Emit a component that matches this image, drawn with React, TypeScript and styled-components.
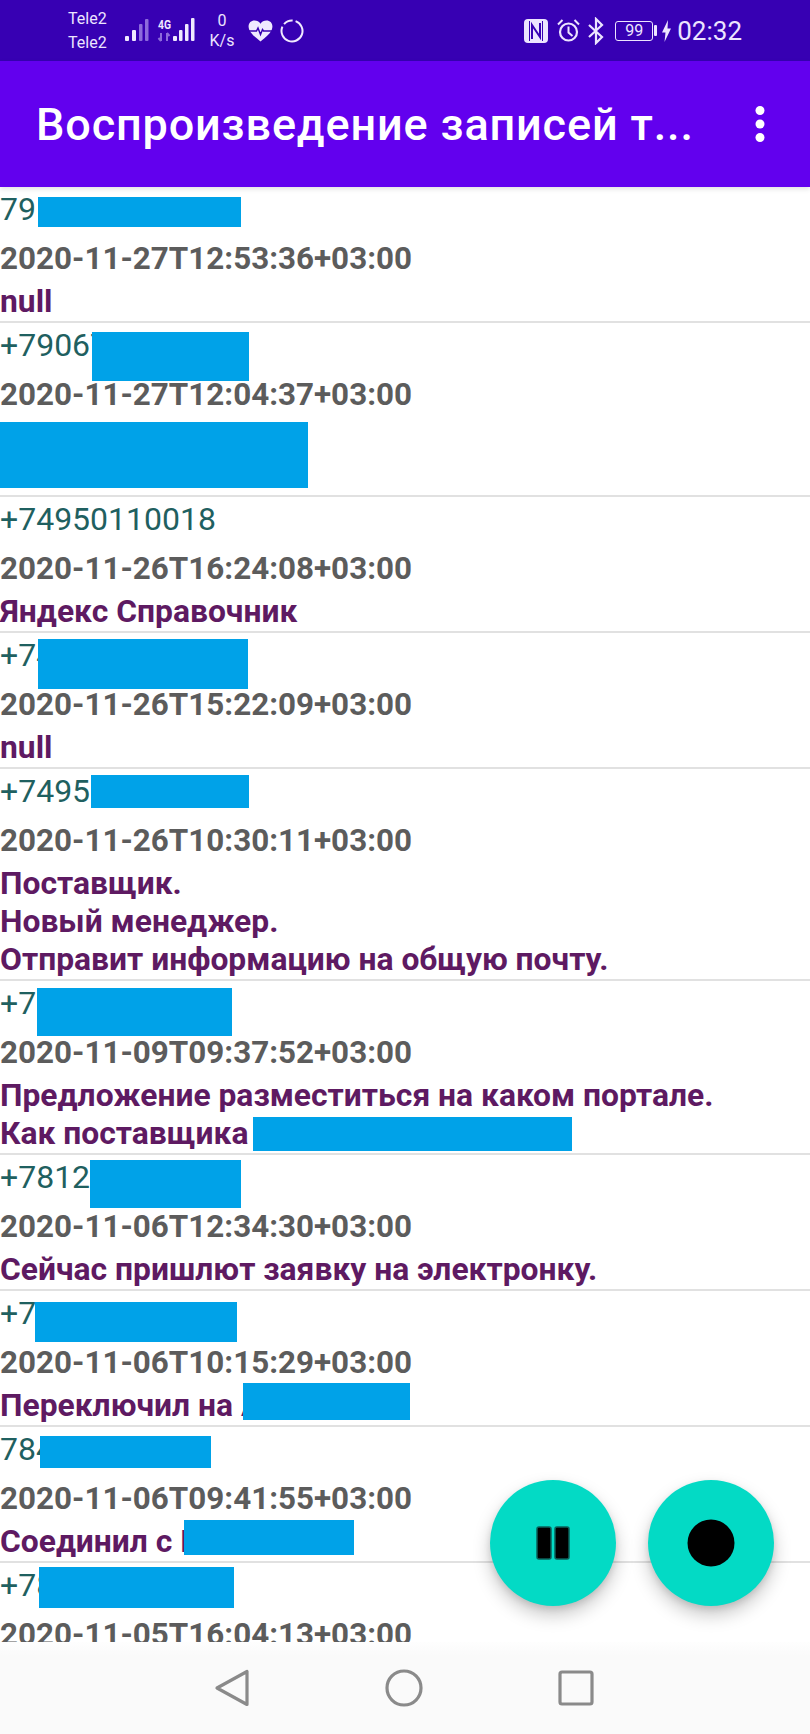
import React from "react";
import styled, { createGlobalStyle } from "styled-components";

type Block = { x: number; y: number; w: number; h: number };

type Call = {
  phone: string;
  date: string;
  note: string[];
  noteLines?: number;
  blocks: Block[];
};

// y of each block is counted from the top of its row
const calls: Call[] = [
  {
    phone: "79",
    date: "2020-11-27T12:53:36+03:00",
    note: ["null"],
    blocks: [{ x: 38, y: 10, w: 203, h: 30 }],
  },
  {
    phone: "+79067",
    date: "2020-11-27T12:04:37+03:00",
    note: [],
    noteLines: 2,
    blocks: [
      { x: 92, y: 9, w: 157, h: 49 },
      { x: 0, y: 99, w: 308, h: 66 },
    ],
  },
  {
    phone: "+74950110018",
    date: "2020-11-26T16:24:08+03:00",
    note: ["Яндекс Справочник"],
    blocks: [],
  },
  {
    phone: "+74",
    date: "2020-11-26T15:22:09+03:00",
    note: ["null"],
    blocks: [{ x: 38, y: 6, w: 210, h: 50 }],
  },
  {
    phone: "+7495",
    date: "2020-11-26T10:30:11+03:00",
    note: ["Поставщик.", "Новый менеджер.", "Отправит информацию на общую почту."],
    blocks: [{ x: 91, y: 6, w: 158, h: 33 }],
  },
  {
    phone: "+7",
    date: "2020-11-09T09:37:52+03:00",
    note: ["Предложение разместиться на каком портале.", "Как поставщика"],
    blocks: [
      { x: 37, y: 7, w: 195, h: 48 },
      { x: 253, y: 136, w: 319, h: 34 },
    ],
  },
  {
    phone: "+7812",
    date: "2020-11-06T12:34:30+03:00",
    note: ["Сейчас пришлют заявку на электронку."],
    blocks: [{ x: 90, y: 5, w: 151, h: 48 }],
  },
  {
    phone: "+7",
    date: "2020-11-06T10:15:29+03:00",
    note: ["Переключил на А"],
    blocks: [
      { x: 35, y: 11, w: 202, h: 40 },
      { x: 243, y: 92, w: 167, h: 37 },
    ],
  },
  {
    phone: "784",
    date: "2020-11-06T09:41:55+03:00",
    note: ["Соединил с Н"],
    blocks: [
      { x: 40, y: 9, w: 171, h: 32 },
      { x: 184, y: 93, w: 170, h: 35 },
    ],
  },
  {
    phone: "+78",
    date: "2020-11-05T16:04:13+03:00",
    note: [],
    blocks: [{ x: 39, y: 4, w: 195, h: 41 }],
  },
];

const App: React.FC = () => {
  return (
    <>
      <GlobalStyle />
      <Page>
        <StatusBar>
          <StatusGroup>
            <Carriers>
              <span>Tele2</span>
              <span>Tele2</span>
            </Carriers>
            <svg width="72" height="30" viewBox="0 0 72 30">
              <g fill="#f0e9ff">
                <rect x="1" y="20" width="4" height="5" rx="1" />
                <rect x="8" y="14" width="4" height="11" rx="1" />
              </g>
              <g fill="#8d6bdc">
                <rect x="15" y="8" width="3.5" height="17" rx="1" />
                <rect x="21" y="3" width="3.5" height="22" rx="1" />
              </g>
              <text x="34" y="13" fontFamily="Roboto, sans-serif" fontSize="13" fontWeight="700" fill="#f0e9ff" textLength="13" lengthAdjust="spacingAndGlyphs">
                4G
              </text>
              <path d="M37 17v8M37 25l-2.5-3M43 25v-8M43 17l2.5 3" stroke="#8d6bdc" strokeWidth="2" fill="none" />
              <g fill="#f0e9ff">
                <rect x="49" y="20" width="4" height="5" rx="1" />
                <rect x="55" y="14" width="3.5" height="11" rx="1" />
                <rect x="61" y="8" width="3.5" height="17" rx="1" />
                <rect x="67" y="2" width="3.5" height="23" rx="1" />
              </g>
            </svg>
            <Speed>
              <span>0</span>
              <span>K/s</span>
            </Speed>
            <HealthIcons>
              <svg width="25" height="22" viewBox="0 0 25 22">
                <path
                  d="M12.5 21.5C8 17.6 1 13 .6 7 .3 3 3 .5 6.5.5c2.500 0 4.700 1.200 6 3.200 1.300-2 3.500-3.200 6-3.200 3.500 0 6.200 2.500 5.900 6.500-.4 6-7.400 10.600-11.900 14.500z"
                  fill="#f0e9ff"
                />
                <path d="M1 11h7.500l1.500-3 2.500 6.500 2-5 1 1.500h8.500" stroke="#3700b3" strokeWidth="1.500" fill="none" />
              </svg>
              <svg width="24" height="24" viewBox="0 0 24 24">
                <circle cx="12" cy="12" r="10.500" stroke="#f0e9ff" strokeWidth="2" fill="none" strokeDasharray="50 3 9.500 3.500" transform="rotate(-70 12 12)" />
              </svg>
            </HealthIcons>
          </StatusGroup>
          <StatusGroup $gap={5}>
            <svg width="28" height="26" viewBox="0 0 28 26">
              <rect x="0" y="1" width="24" height="24" rx="4" fill="#ece4ff" />
              <path d="M8 21V7l8 12V5" stroke="#3700b3" strokeWidth="2" fill="none" />
              <path d="M5.500 3v20M18.500 3v20" stroke="#3700b3" strokeWidth="1" />
            </svg>
            <svg width="26" height="26" viewBox="0 0 26 26">
              <circle cx="11.500" cy="14" r="8.500" stroke="#ece4ff" strokeWidth="2.200" fill="none" />
              <path d="M11.500 8.500V14.500L15.500 18" stroke="#ece4ff" strokeWidth="2" fill="none" />
              <path d="M1 6.500 5.500 2M22 6.500 17.500 2" stroke="#ece4ff" strokeWidth="2" fill="none" />
            </svg>
            <svg width="19" height="28" viewBox="0 0 19 28">
              <path d="M1 8l13 12-6 6V2l6 6L1 20" stroke="#ece4ff" strokeWidth="2.200" fill="none" />
            </svg>
            <Battery>
              <BatteryBody>99</BatteryBody>
              <BatteryTip />
            </Battery>
            <svg width="10" height="22" viewBox="0 0 10 22">
              <path d="M6 0 0 12.500h3.500L2.500 22 9 8.500H5.500z" fill="#ece4ff" />
            </svg>
            <Clock>02:32</Clock>
          </StatusGroup>
        </StatusBar>

        <AppBar>
          <Title>Воспроизведение записей т...</Title>
          <svg width="10" height="36" viewBox="0 0 10 36">
            <circle cx="5" cy="4.500" r="4.500" fill="#fff" />
            <circle cx="5" cy="18" r="4.500" fill="#fff" />
            <circle cx="5" cy="31.500" r="4.500" fill="#fff" />
          </svg>
        </AppBar>

        <List>
          {calls.map((call) => (
            <Row key={call.date}>
              <Phone>{call.phone}</Phone>
              <CallDate>{call.date}</CallDate>
              <Note $lines={call.noteLines ?? 1}>
                {call.note.map((line) => (
                  <div key={line}>{line}</div>
                ))}
              </Note>
              {call.blocks.map((b) => (
                <Redaction key={`${b.x}-${b.y}`} $x={b.x} $y={b.y} $w={b.w} $h={b.h} />
              ))}
            </Row>
          ))}
        </List>

        <Fabs>
          <Fab>
            <svg width="34" height="34" viewBox="0 0 34 34">
              <rect x="1" y="1" width="14" height="32" rx="2" fill="#000" stroke="#0b5f58" strokeWidth="1.500" />
              <rect x="19" y="1" width="14" height="32" rx="2" fill="#000" stroke="#0b5f58" strokeWidth="1.500" />
            </svg>
          </Fab>
          <Fab>
            <svg width="48" height="48" viewBox="0 0 48 48">
              <circle cx="24" cy="24" r="23.500" fill="#000" />
            </svg>
          </Fab>
        </Fabs>

        <NavBar>
          <svg width="36" height="38" viewBox="0 0 36 38">
            <path d="M33 2.500v33L3 19z" stroke="#8a8a8a" strokeWidth="3.200" strokeLinejoin="round" fill="none" />
          </svg>
          <svg width="38" height="38" viewBox="0 0 38 38">
            <circle cx="19" cy="19" r="17" stroke="#8a8a8a" strokeWidth="3.200" fill="none" />
          </svg>
          <svg width="36" height="36" viewBox="0 0 36 36">
            <rect x="2" y="2" width="32" height="32" rx="2" stroke="#8a8a8a" strokeWidth="3.200" fill="none" />
          </svg>
        </NavBar>
      </Page>
    </>
  );
};

export default App;

const GlobalStyle = createGlobalStyle`
  html, body {
    margin: 0;
    padding: 0;
    background: #fff;
  }
  body {
    font-family: Roboto, "Liberation Sans", sans-serif;
  }
`;

const Page = styled.div`
  position: relative;
  width: 810px;
  height: 1734px;
  display: flex;
  flex-direction: column;
  overflow: hidden;
  background: #fff;
`;

const StatusBar = styled.div`
  height: 61px;
  flex: none;
  display: flex;
  align-items: center;
  justify-content: space-between;
  padding: 0 68px;
  background: #3700b3;
  color: #ece4ff;
`;

const StatusGroup = styled.div<{ $gap?: number }>`
  display: flex;
  align-items: center;
  gap: ${(p) => p.$gap ?? 12}px;
`;

const Carriers = styled.div`
  width: 44px;
  display: flex;
  flex-direction: column;
  font-size: 16px;
  line-height: 24px;
`;

const Speed = styled.div`
  width: 28px;
  display: flex;
  flex-direction: column;
  align-items: center;
  font-size: 16px;
  line-height: 20px;
`;

const HealthIcons = styled.div`
  display: flex;
  align-items: center;
  gap: 7px;
`;

const Battery = styled.div`
  width: 45px;
  display: flex;
  align-items: center;
  justify-content: flex-end;
  gap: 1px;
`;

const BatteryBody = styled.div`
  width: 38px;
  height: 20px;
  box-sizing: border-box;
  display: flex;
  align-items: center;
  justify-content: center;
  border: 1px solid #ece4ff;
  border-radius: 3px;
  font-size: 16px;
`;

const BatteryTip = styled.div`
  width: 3px;
  height: 11px;
  background: #ece4ff;
  border-radius: 1px;
`;

const Clock = styled.div`
  font-size: 26px;
  line-height: 30px;
`;

const AppBar = styled.div`
  height: 126px;
  flex: none;
  display: flex;
  align-items: center;
  justify-content: space-between;
  padding: 0 45px 0 36px;
  background: #6200ee;
  box-shadow: 0 2px 5px rgba(0, 0, 0, 0.12);
  position: relative;
  z-index: 1;
`;

const Title = styled.div`
  font-size: 45px;
  font-weight: 500;
  letter-spacing: 0.85px;
  color: #fff;
  white-space: nowrap;
`;

const List = styled.div`
  flex: 1;
  min-height: 0;
  overflow: hidden;
`;

const Row = styled.div`
  position: relative;
  border-bottom: 2px solid #e1e1e1;
`;

const Phone = styled.div`
  font-size: 32px;
  line-height: 44px;
  color: #1f6060;
`;

const CallDate = styled.div`
  margin: 3px 0 -2px;
  font-size: 31.4px;
  line-height: 50px;
  font-weight: 700;
  color: #5c5c5c;
`;

const Note = styled.div<{ $lines: number }>`
  min-height: ${(p) => p.$lines * 38}px;
  padding-bottom: 1px;
  font-size: 31.8px;
  line-height: 38px;
  font-weight: 700;
  color: #5e1a62;
`;

const Redaction = styled.div<{ $x: number; $y: number; $w: number; $h: number }>`
  position: absolute;
  left: ${(p) => p.$x}px;
  top: ${(p) => p.$y}px;
  width: ${(p) => p.$w}px;
  height: ${(p) => p.$h}px;
  background: #00a2e8;
`;

const Fabs = styled.div`
  position: absolute;
  right: 36px;
  bottom: 128px;
  display: flex;
  gap: 32px;
`;

const Fab = styled.div`
  width: 126px;
  height: 126px;
  display: flex;
  align-items: center;
  justify-content: center;
  border-radius: 50%;
  background: #03dac5;
  box-shadow: 0 9px 18px rgba(0, 0, 0, 0.22), 0 3px 6px rgba(0, 0, 0, 0.1);
`;

const NavBar = styled.div`
  height: 92px;
  flex: none;
  box-sizing: border-box;
  display: flex;
  align-items: center;
  justify-content: center;
  gap: 135px;
  padding-right: 2px;
  background: linear-gradient(#fefefe, #fafafa 14px);
`;
